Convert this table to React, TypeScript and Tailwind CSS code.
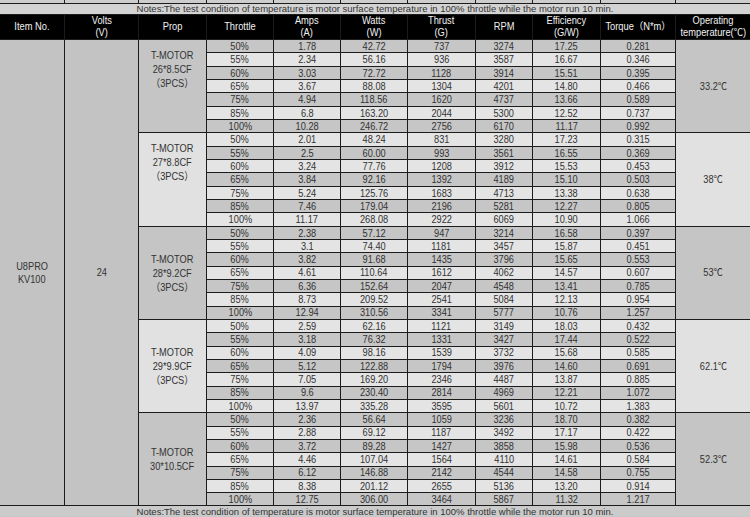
import React from "react";

type Group = {
  prop: string[];
  temp: string;
  shift: boolean;
  rows: string[][];
};

const groups: Group[] = [
  {
    prop: ["T-MOTOR", "26*8.5CF", "（3PCS）"],
    temp: "33.2℃",
    shift: true,
    rows: [
      ["50%", "1.78", "42.72", "737", "3274", "17.25", "0.281"],
      ["55%", "2.34", "56.16", "936", "3587", "16.67", "0.346"],
      ["60%", "3.03", "72.72", "1128", "3914", "15.51", "0.395"],
      ["65%", "3.67", "88.08", "1304", "4201", "14.80", "0.466"],
      ["75%", "4.94", "118.56", "1620", "4737", "13.66", "0.589"],
      ["85%", "6.8", "163.20", "2044", "5300", "12.52", "0.737"],
      ["100%", "10.28", "246.72", "2756", "6170", "11.17", "0.992"],
    ],
  },
  {
    prop: ["T-MOTOR", "27*8.8CF", "（3PCS）"],
    temp: "38℃",
    shift: true,
    rows: [
      ["50%", "2.01", "48.24", "831", "3280", "17.23", "0.315"],
      ["55%", "2.5", "60.00", "993", "3561", "16.55", "0.369"],
      ["60%", "3.24", "77.76", "1208", "3912", "15.53", "0.453"],
      ["65%", "3.84", "92.16", "1392", "4189", "15.10", "0.503"],
      ["75%", "5.24", "125.76", "1683", "4713", "13.38", "0.638"],
      ["85%", "7.46", "179.04", "2196", "5281", "12.27", "0.805"],
      ["100%", "11.17", "268.08", "2922", "6069", "10.90", "1.066"],
    ],
  },
  {
    prop: ["T-MOTOR", "28*9.2CF", "（3PCS）"],
    temp: "53℃",
    shift: false,
    rows: [
      ["50%", "2.38", "57.12", "947", "3214", "16.58", "0.397"],
      ["55%", "3.1", "74.40", "1181", "3457", "15.87", "0.451"],
      ["60%", "3.82", "91.68", "1435", "3796", "15.65", "0.553"],
      ["65%", "4.61", "110.64", "1612", "4062", "14.57", "0.607"],
      ["75%", "6.36", "152.64", "2047", "4548", "13.41", "0.785"],
      ["85%", "8.73", "209.52", "2541", "5084", "12.13", "0.954"],
      ["100%", "12.94", "310.56", "3341", "5777", "10.76", "1.257"],
    ],
  },
  {
    prop: ["T-MOTOR", "29*9.9CF", "（3PCS）"],
    temp: "62.1℃",
    shift: false,
    rows: [
      ["50%", "2.59", "62.16", "1121", "3149", "18.03", "0.432"],
      ["55%", "3.18", "76.32", "1331", "3427", "17.44", "0.522"],
      ["60%", "4.09", "98.16", "1539", "3732", "15.68", "0.585"],
      ["65%", "5.12", "122.88", "1794", "3976", "14.60", "0.691"],
      ["75%", "7.05", "169.20", "2346", "4487", "13.87", "0.885"],
      ["85%", "9.6", "230.40", "2814", "4969", "12.21", "1.072"],
      ["100%", "13.97", "335.28", "3595", "5601", "10.72", "1.383"],
    ],
  },
  {
    prop: ["T-MOTOR", "30*10.5CF"],
    temp: "52.3℃",
    shift: false,
    rows: [
      ["50%", "2.36", "56.64", "1059", "3236", "18.70", "0.382"],
      ["55%", "2.88", "69.12", "1187", "3492", "17.17", "0.422"],
      ["60%", "3.72", "89.28", "1427", "3858", "15.98", "0.536"],
      ["65%", "4.46", "107.04", "1564", "4110", "14.61", "0.584"],
      ["75%", "6.12", "146.88", "2142", "4544", "14.58", "0.755"],
      ["85%", "8.38", "201.12", "2655", "5136", "13.20", "0.914"],
      ["100%", "12.75", "306.00", "3464", "5867", "11.32", "1.217"],
    ],
  },
];

const headers: string[][] = [
  ["Item No."],
  ["Volts", "(V)"],
  ["Prop"],
  ["Throttle"],
  ["Amps", "(A)"],
  ["Watts", "(W)"],
  ["Thrust", "(G)"],
  ["RPM"],
  ["Efficiency", "(G/W)"],
  ["Torque（N*m）"],
  ["Operating", "temperature(℃)"],
];

const NOTE =
  "Notes:The test condition of temperature is motor surface temperature in 100% throttle while the motor run 10 min.";

function T({ children }: { children: React.ReactNode }) {
  return <span className="inline-block whitespace-nowrap scale-x-[0.88]">{children}</span>;
}

export default function App() {
  return (
    <div className="w-[750px] h-[517px] overflow-hidden bg-[#c8c8c8]">
      <div className="grid grid-cols-[64px_73px_67px_66px_66px_66px_67px_56px_67px_74px_74px] grid-rows-[3px_10px_24px_repeat(35,12.33px)_10px] gap-px bg-[#1c1c1c] font-['Liberation_Sans','Noto_Sans_CJK_SC',sans-serif] text-[#333]">
        {headers.map((_, i) => (
          <div key={"s" + i} className="bg-[#cdcdcd]" />
        ))}
        <div className="col-span-11 bg-[#d3d3d3] flex items-center justify-center text-[9.5px] leading-[10px] text-[#333]">
          {NOTE}
        </div>
        {headers.map((h, i) => (
          <div
            key={"h" + i}
            className="bg-black text-[#f2f2f2] flex flex-col items-center justify-center text-[10px] leading-[12px] whitespace-nowrap"
          >
            {h.map((t, j) => (
              <span key={j} className="inline-block scale-x-[0.93]">
                {t}
              </span>
            ))}
          </div>
        ))}
        {groups.map((g, gi) =>
          g.rows.map((row, ri) => {
            const r = gi * 7 + ri;
            const dark = r % 2 === 0;
            const lightGroup = gi % 2 === 1;
            return (
              <React.Fragment key={"r" + r}>
                {r === 0 && (
                  <>
                    <div className="row-span-[35] bg-[#c3c3c3] flex flex-col items-center justify-center text-[10.5px] leading-[13px]">
                      <T>U8PRO</T>
                      <T>KV100</T>
                    </div>
                    <div className="row-span-[35] bg-[#c3c3c3] flex items-center justify-center text-[10.5px] leading-[13px]">
                      <T>24</T>
                    </div>
                  </>
                )}
                {ri === 0 && (
                  <div
                    className={`row-span-7 col-start-3 flex flex-col items-center justify-center text-[10.5px] leading-[14px] ${
                      lightGroup ? "bg-[#e1e1e1]" : "bg-[#c5c5c5]"
                    } ${g.shift ? "pb-[34px]" : "pb-0"}`}
                  >
                    {g.prop.map((t, j) => (
                      <T key={j}>{t}</T>
                    ))}
                  </div>
                )}
                {row.map((v, ci) => (
                  <div
                    key={ci}
                    className={`flex items-center justify-center text-[10.5px] leading-none ${
                      ci === 0 ? "col-start-4" : ""
                    } ${dark ? "bg-[#c6c6c6]" : "bg-[#e4e4e4]"}`}
                  >
                    <T>{v}</T>
                  </div>
                ))}
                {ri === 0 && (
                  <div
                    className={`row-span-7 col-start-11 flex items-center justify-center text-[10.5px] leading-none ${
                      lightGroup ? "bg-[#e1e1e1]" : "bg-[#c5c5c5]"
                    }`}
                  >
                    <T>{g.temp}</T>
                  </div>
                )}
              </React.Fragment>
            );
          })
        )}
        <div className="col-span-11 bg-[#cbcbcb] flex items-start justify-center text-[9.5px] leading-[11px] text-[#333]">
          {NOTE}
        </div>
      </div>
    </div>
  );
}
